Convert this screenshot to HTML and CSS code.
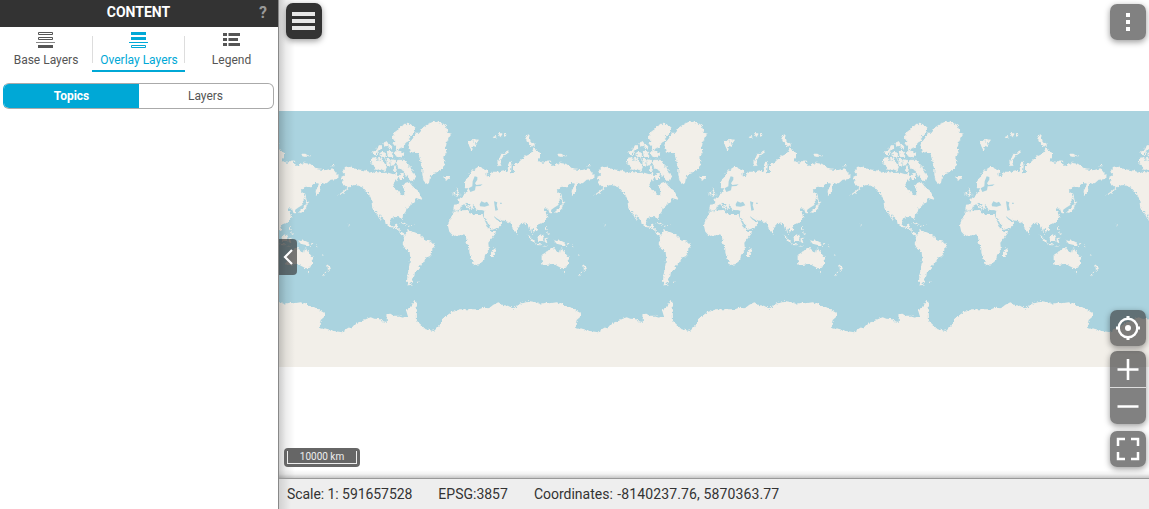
FILE: index.html
```html
<!DOCTYPE html>
<html lang="en">
<head>
<meta charset="utf-8">
<title>Map viewer</title>
<link rel="stylesheet" href="styles.css">
</head>
<body>
<div class="app">
  <aside class="panel">
    <header class="panel-header"><h1>CONTENT</h1><span class="help">?</span></header>
    <nav class="tabs">
      <a class="tab">
        <svg class="tab-icon" width="20" height="18" viewBox="1 0 20 18"><path d="M3.500 1.500h14v2h-14zM3.500 6.500h14v2h-14z" fill="none" stroke="#555"/><path d="M1 11h19v1H1z" fill="#888"/><path d="M3 14h15v3H3z" fill="#555"/></svg>
        <span>Base Layers</span>
      </a>
      <a class="tab tab-active">
        <svg class="tab-icon" width="20" height="18" viewBox="1 0 20 18"><path d="M3 1h15v3H3zM3 6h15v3H3zM1 11h19v1H1z" fill="#00a8d6"/><path d="M3.5 14.5h14v2h-14z" fill="none" stroke="#00a8d6"/></svg>
        <span class="nudge">Overlay Layers</span>
      </a>
      <a class="tab">
        <svg class="tab-icon" width="20" height="18" viewBox="1 0 20 18"><path d="M2 2h4v3H2zM7.500 2H19v3H7.500zM2 7h4v3H2zM7.500 7H17v3H7.500zM2 12h4v3H2zM7.500 12H19v3H7.500z" fill="#555"/></svg>
        <span>Legend</span>
      </a>
    </nav>
    <div class="switch"><b class="switch-on">Topics</b><span class="switch-off">Layers</span></div>
  </aside>
  <main class="main">
    <section class="map">
      <svg class="world" width="870" height="256" viewBox="279 111 870 256">
        <defs>
          <filter id="coast" x="-5%" y="-5%" width="110%" height="110%"><feTurbulence type="fractalNoise" baseFrequency=".13" numOctaves="3" seed="4"/><feDisplacementMap in="SourceGraphic" scale="11" xChannelSelector="R" yChannelSelector="G"/></filter>
          <g id="land" transform="translate(335 111) scale(.33333)">
            <g filter="url(#coast)">
              <!-- North America -->
              <path d="M22 182 30 168 42 165 50 170 75 176 90 178 112 186 120 182 140 186 160 185 175 190 185 182 190 198 184 210 175 220 180 235 190 240 203 255 208 250 207 235 203 225 212 215 222 212 232 225 240 232 250 240 258 255 262 266 245 262 238 275 228 278 225 285 215 292 212 302 203 314 203 328 196 319 180 318 168 322 164 335 168 345 178 347 184 338 192 338 186 350 194 354 194 362 204 368 212 372 207 377 198 371 192 360 182 352 165 348 152 340 150 330 135 312 130 309 141 331 132 322 124 305 112 292 110 275 108 262 102 250 85 230 62 222 50 224 40 235 20 248 5 256 22 243 38 231 28 222 20 215 25 205 18 198 30 192Z"/>
              <!-- Greenland -->
              <path d="M243 65 255 65 262 50 280 38 300 30 318 35 332 45 340 65 350 68 342 80 335 95 332 110 335 125 325 140 328 155 328 168 315 180 298 185 285 200 282 215 278 220 268 212 262 195 262 175 258 160 255 145 250 130 240 122 225 125 220 105 222 95 232 85Z"/>
              <!-- Arctic islands -->
              <g class="islands">
              <path d="M240 50 225 40 210 40 195 48 188 58 178 66 172 82 182 88 174 98 185 104 184 116 200 110 208 104 210 95 222 88 221 78 235 68Z"/>
              <path d="M178 125 190 120 206 126 204 138 185 136ZM188 148 208 148 218 163 232 176 230 184 242 195 235 210 222 204 220 194 210 190 205 176 190 170ZM170 146 179 148 176 162 168 164ZM120 140 110 142 108 158 118 162 122 175 138 173 150 178 154 168 144 152 130 150ZM156 142 166 148 163 166 156 162ZM180 164 184 178 176 178ZM192 194 204 188 207 200 196 206ZM157 120 168 122 174 136 160 137ZM138 124 150 126 152 136 139 137ZM114 124 124 116 130 124 121 134ZM126 110 139 103 140 112 128 118ZM147 96 155 92 160 102 149 106ZM162 100 170 106 171 114 162 112ZM131 138 142 144 132 148Z"/>
              </g>
              <!-- South America and Caribbean -->
              <path d="M220 358 235 362 250 368 262 378 268 387 290 392 300 402 292 415 290 428 284 436 272 440 268 450 255 468 248 478 240 482 238 495 232 503 232 512 226 518 234 525 222 522 216 510 218 490 222 470 226 440 224 425 212 415 203 400 206 388 208 375Z"/>
              <path d="M194 334 206 334 217 341 206 340ZM218 342 227 344 220 347ZM246 512h6l-1 4-5-1ZM231 342h4v2h-4ZM38 338h3l4 4-3 2ZM0 188 8 192 12 200 2 203-4 194ZM246 252 254 262 262 262 258 254Z"/>
            </g>
            <g transform="translate(315)" filter="url(#coast)">
              <!-- Eurasia -->
              <path d="M72 215 85 198 95 180 115 167 135 172 147 182 135 192 150 195 155 182 175 182 190 178 202 182 205 155 212 150 215 165 212 188 222 185 222 160 232 158 240 150 258 132 275 124 281 112 300 125 300 140 292 150 310 155 325 148 338 165 360 155 378 158 400 175 425 178 445 172 458 188 465 195 455 205 440 206 425 220 412 215 408 240 396 256 395 240 405 218 395 215 385 225 362 228 350 240 360 248 362 262 355 282 342 290 333 297 336 308 328 305 324 293 312 292 318 305 322 320 315 330 300 338 290 342 294 355 284 362 274 350 275 360 282 374 276 370 270 354 265 340 255 338 248 335 235 350 230 365 225 364 215 345 212 335 195 330 180 328 170 322 161 314 168 325 177 330 188 332 183 344 172 351 155 357 148 345 136 322 131 312 133 299 120 297 108 296 104 286 97 281 101 293 95 293 87 279 80 274 76 277 92 293 88 296 72 280 63 285 60 295 50 300 40 298 42 281 55 280 58 272 52 265 65 258 75 250 80 240 85 232 75 232Z"/>
              <path d="M42 302 65 298 85 297 85 305 105 312 128 312 135 330 145 350 152 360 168 360 165 370 145 395 147 418 135 432 132 448 118 460 102 462 95 445 88 425 88 410 80 395 78 375 65 372 40 375 28 362 24 345 28 328Z"/>
              <path d="M165 411 168 420 161 438 153 438 153 424ZM48 229 55 238 52 242 62 253 48 258 52 247ZM38 245 46 242 46 253 38 254ZM10 195 28 195 30 203 18 207ZM83 91 93 87 101 93 99 84 117 86 112 94 105 94 108 109 100 104 95 120 88 106ZM158 78l8-3 5 4-9 3ZM174 72l4-6 10 2-6 10ZM192 70l7-1-1 6-6 2ZM205 118 184 129 172 156 176 166 183 162 180 151 190 136 207 124ZM260 73 266 70 272 91 284 98 284 108 274 105 259 90ZM352 128 364 128 370 132 364 138 355 136ZM372 133h8v3h-7ZM360 147h5v4h-5ZM442 162h6v4h-7Z"/>
              <!-- Oceania and eastern islands -->
              <path d="M305 432 320 422 332 412 345 412 348 420 360 426 364 408 370 420 385 438 387 452 378 470 365 472 352 465 340 458 320 462 308 462 305 448ZM368 480 377 480 373 487ZM430 460 441 472 432 480ZM431 477 420 496 414 493ZM340 386 350 390 360 388 371 393 379 405 365 402 350 398ZM292 380 305 370 312 375 308 390 295 390ZM263 372 269 375 285 393 281 396ZM285 397 302 400 303 403 288 402ZM314 382 326 380 319 385 322 396 314 393ZM315 346 321 346 320 356 315 356ZM321 360 330 369 324 372ZM368 279 367 292 352 305 342 305 357 292 362 280ZM366 270 376 273 368 280ZM364 247 368 270 361 266ZM230 364 234 368 232 372ZM307 404h15l-4 3-10-1ZM380 396h8l-3 4ZM392 400l8 6-2 2ZM413 428l6 5-2 1ZM281 342h5v4h-5Z"/>
            </g>
            <!-- Antarctica -->
            <path filter="url(#coast)" transform="translate(-168 522)" d="M-10 51 0 53 15 56 30 53 46 55 65 52 82 58 95 65 105 66 115 72 138 85 138 94 125 105 122 120 125 135 132 130 145 132 165 138 190 142 205 130 220 126 230 115 252 107 260 103 275 97 286 101 300 102 310 109 324 110 322 88 334 86 345 92 360 92 370 98 387 95 381 75 391 70 397 66 404 48 410 43 413 57 414 108 430 123 440 133 465 138 485 118 490 102 505 90 520 80 545 73 600 73 612 68 630 70 642 60 658 52 672 60 687 62 703 71 725 55 745 52 750 48 778 53V262H-10Z"/>
            <!-- Inland and enclosed seas -->
            <g fill="#aad3df" transform="translate(315)"><path d="M104 196 112 198 112 206 105 217 109 222 128 220 121 225 107 226 105 238 91 243 86 232 97 226 98 211ZM119 280 124 271 134 275 141 272 148 283 134 287 120 286ZM162 271 172 274 170 283 174 297 166 299 164 285ZM180 275h5v4h-4Z"/></g>
          </g>
        </defs>
        <path d="M279 111h870v256H279z" fill="#aad3df"/>
        <g fill="#f2efe9"><use href="#land" x="-256"/><use href="#land"/><use href="#land" x="256"/><use href="#land" x="512"/><use href="#land" x="768"/></g>
      </svg>
      <div class="edge-shadow"></div>
      <button class="btn menu"><svg width="36" height="36"><path d="M6 9h23v4H6zM6 16h23v4H6zM6 23h23v4H6z" fill="#e8e8e8"/></svg></button>
      <button class="collapse"><svg width="18" height="36"><path d="M13 11 6 18l7 7" fill="none" stroke="#fff" stroke-width="2.200"/></svg></button>
      <button class="btn more"><svg width="36" height="36"><path d="M16 9h4v4h-4zM16 16h4v4h-4zM16 23h4v4h-4z" fill="#fff"/></svg></button>
      <div class="controls">
        <button class="btn locate"><svg width="36" height="36"><circle cx="18" cy="18" r="9.300" fill="none" stroke="#fff" stroke-width="2.400"/><circle cx="18" cy="18" r="3" fill="#fff"/><path d="M18 6v4M18 26v4M6 18h4M26 18h4" stroke="#fff" stroke-width="3"/></svg></button>
        <div class="zoom">
          <button class="zoom-btn zoom-in"><svg width="36" height="36"><path d="M7.500 18.500h21M18 8v21" stroke="#fff" stroke-width="2.600"/></svg></button>
          <button class="zoom-btn"><svg width="36" height="36"><path d="M7.500 18.500h21" stroke="#fff" stroke-width="2.600"/></svg></button>
        </div>
        <button class="btn full"><svg width="36" height="36"><path d="M8 15V8h7M21 8h7v7M28 21v7h-7M15 28H8v-7" fill="none" stroke="#fff" stroke-width="2.500"/></svg></button>
      </div>
      <div class="scale"><div class="scale-bar">10000 km</div></div>
    </section>
    <footer class="status"><span class="ratio">Scale: 1: 591657528</span><span>EPSG:3857</span><span>Coordinates: <i class="coords">-8140237.76, 5870363.77</i></span></footer>
  </main>
</div>
</body>
</html>
```
FILE: styles.css
```css
* { box-sizing: border-box; }
body { margin: 0; font-family: Roboto, "Liberation Sans", sans-serif; color: #333; }
svg { display: block; }
button { border: 0; padding: 0; margin: 0; }
.app { display: flex; width: 1149px; height: 509px; overflow: hidden; background: #fff; }
.panel { width: 279px; flex: none; border-right: 1px solid #888; }
.panel-header { height: 27px; background: #333; color: #fff; display: grid; grid-template-columns: 30px 1fr 30px; text-align: center; line-height: 24px; }
.panel-header h1 { grid-column: 2; margin: 0; padding-right: 1px; font-size: 14px; font-weight: 700; }
.help { color: #999; font-size: 16px; font-weight: 700; line-height: 26px; }
.tabs { display: grid; grid-template-columns: 92px 93px 93px; height: 45px; padding-top: 4px; }
.tab { display: flex; flex-direction: column; align-items: center; font-size: 12px; line-height: 14px; color: #555; height: 41px; white-space: nowrap; }
.tab span { margin-top: 4px; }
.tab .nudge { padding-left: 1px; }
.tab-active { color: #00a8d6; border-bottom: 2px solid #00a8d6; margin-left: 0; background: linear-gradient(#ddd, #ddd) 0 5px / 1px 27px no-repeat, linear-gradient(#ddd, #ddd) 100% 5px / 1px 27px no-repeat; }
.switch { display: grid; grid-template-columns: 135px 1fr; margin: 11px 4px 0 3px; height: 26px; border: 1px solid #aaa; border-left-color: #00a8d6; border-radius: 6px; overflow: hidden; font-size: 12px; line-height: 24px; text-align: center; color: #555; }
.switch-on { background: #00a8d6; color: #fff; margin: -1px 0 -1px -1px; padding-left: 1px; line-height: 26px; }
.switch-off { padding-right: 1px; }
.main { flex: 1; display: flex; flex-direction: column; min-width: 0; }
.map { position: relative; height: 478px; padding-top: 111px; background: #fff; }
.islands { stroke: #f2efe9; stroke-width: 3px; }
.edge-shadow { position: absolute; inset: 0; background: linear-gradient(90deg, rgba(0,0,0,.2), rgba(0,0,0,.07) 7px, transparent 16px), linear-gradient(0deg, rgba(0,0,0,.22), rgba(0,0,0,.05) 4px, transparent 8px); }
.btn { width: 36px; height: 36px; border-radius: 7px; background: rgba(51,51,51,.62); box-shadow: 0 2px 6px rgba(0,0,0,.4); }
.menu { position: absolute; left: 7px; top: 3px; background: #333; }
.more { position: absolute; right: 3px; top: 4px; }
.collapse { position: absolute; left: 0; top: 239px; width: 18px; height: 36px; border-radius: 0 4px 4px 0; background: rgba(51,51,51,.65); }
.controls { position: absolute; right: 3px; top: 310px; display: flex; flex-direction: column; }
.zoom { margin: 5px 0 7px; border-radius: 7px; overflow: hidden; box-shadow: 0 2px 6px rgba(0,0,0,.4); }
.zoom-btn { display: block; width: 36px; height: 36px; background: rgba(51,51,51,.62); }
.zoom-in { height: 37px; border-bottom: 1px solid #ddd; }
.scale { position: absolute; left: 5px; top: 448px; width: 76px; height: 19px; padding: 3px; border-radius: 4px; background: #666; }
.scale-bar { height: 13px; border: 1px solid #eee; border-top: 0; color: #eee; font-size: 10px; line-height: 11px; text-align: center; }
.status { height: 31px; border-top: 1px solid #999; background: linear-gradient(90deg, rgba(0,0,0,.12), transparent 12px), #eee; display: flex; gap: 26px; padding-left: 8px; font-size: 14px; line-height: 31px; white-space: nowrap; }
.ratio { letter-spacing: -.06px; }
.coords { font-style: normal; margin-left: 1px; letter-spacing: .12px; }
```
